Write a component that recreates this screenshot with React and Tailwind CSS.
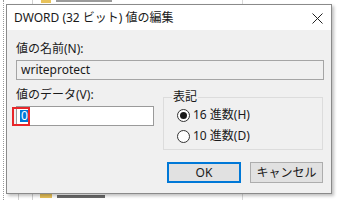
import React from 'react';

const font = { fontFamily: '"Noto Sans", "Noto Sans CJK JP", sans-serif' };

const Radio = ({ checked, label }) => (
  <div className="flex items-center h-[16px] gap-[3px]">
    <span className="w-[13px] h-[13px] rounded-full border border-[#333333] bg-white flex items-center justify-center">
      {checked && <span className="w-[7px] h-[7px] rounded-full bg-[#1a1a1a]" />}
    </span>
    <span className="text-[12px] leading-[16px] text-[#1a1a1a]">{label}</span>
  </div>
);

const Button = ({ children, focused, className = '' }) => (
  <button
    className={
      'h-[21px] bg-[#e1e1e1] text-[12px] leading-[16px] text-[#1a1a1a] flex items-center justify-center ' +
      (focused ? 'border-2 border-[#0078d7] ' : 'border border-[#adadad] ') +
      className
    }
  >
    {children}
  </button>
);

export default function App() {
  return (
    <div className="relative w-[340px] h-[200px] bg-white overflow-hidden" style={font}>
      {/* explorer behind the dialog */}
      <div className="absolute left-[3px] top-0 h-[200px] border-l border-dotted border-[#9a9a9a]" />
      <div className="absolute left-[18px] top-[185px] h-[15px] border-l border-[#d0d0d0]" />
      <div className="absolute left-[32px] top-0 h-[200px] border-l border-[#d0d0d0]" />
      <div className="absolute left-[242px] top-0 h-[200px] border-l border-[#d8d8d8]" />
      <div className="absolute left-[41px] top-0 w-[10px] h-[3px] bg-[#e8c25a]" />
      <div className="absolute left-[56px] top-0 w-[56px] h-[2px] bg-[#9a9a9a]" />
      <div className="absolute left-[40px] top-[193px] w-[12px] h-[5px] bg-[#e8c25a]" />
      <div className="absolute left-[57px] top-[195px] w-[48px] h-[3px] bg-[#6a6a6a]" />

      {/* dialog window */}
      <div className="absolute left-[6px] top-[4px] w-[326px] h-[190px] border border-[#8a8a8a] bg-[#f0f0f0] shadow-[2px_2px_3px_rgba(0,0,0,0.25)] flex flex-col">
        <div className="h-[25px] bg-white flex items-center justify-between pl-[7px] pr-[8px]">
          <span className="text-[12px] leading-[16px] text-[#1a1a1a]">DWORD (32 ビット) 値の編集</span>
          <svg width="11" height="11" viewBox="0 0 11 11" className="mt-[1px]">
            <path d="M0.5 0.5 L10.5 10.5 M10.5 0.5 L0.5 10.5" stroke="#222" strokeWidth="1" />
          </svg>
        </div>

        <div className="flex-1 pl-[9px] pr-[7px] flex flex-col">
          <div className="mt-[11px] h-[16px] text-[12px] leading-[16px] text-[#1a1a1a]">値の名前(N):</div>
          <div className="mt-[3px] h-[20px] border border-[#a5a5a5] bg-[#f0f0f0] flex items-center pl-[4px] text-[12px] leading-[16px] text-[#1a1a1a]">
            writeprotect
          </div>

          <div className="flex">
            <div className="w-[138px] flex flex-col">
              <div className="mt-[7px] h-[16px] text-[12px] leading-[16px] text-[#1a1a1a]">値のデータ(V):</div>
              <div className="relative mt-[3px] h-[20px] border border-[#9a9a9a] bg-white flex items-center pl-[3px]">
                <span className="bg-[#0078d7] text-white text-[12px] leading-[12px] h-[12px] px-[1px]">0</span>
                <div className="absolute left-[-5px] top-[0px] w-[18px] h-[19px] border-2 border-[#e8262a]" />
              </div>
            </div>

            <div className="relative ml-[9px] mt-[17px] w-[160px] h-[53px] border border-[#dcdcdc] flex flex-col pl-[13px] pt-[9px] gap-[5px]">
              <span className="absolute left-[8px] top-[-9px] px-[1px] bg-[#f0f0f0] text-[12px] leading-[16px] text-[#1a1a1a]">表記</span>
              <Radio checked label="16 進数(H)" />
              <Radio label="10 進数(D)" />
            </div>
          </div>

          <div className="mt-[12px] flex justify-end gap-[9px] pr-[1px]">
            <Button focused className="w-[74px]">OK</Button>
            <Button className="w-[73px]">キャンセル</Button>
          </div>
        </div>
      </div>
    </div>
  );
}
